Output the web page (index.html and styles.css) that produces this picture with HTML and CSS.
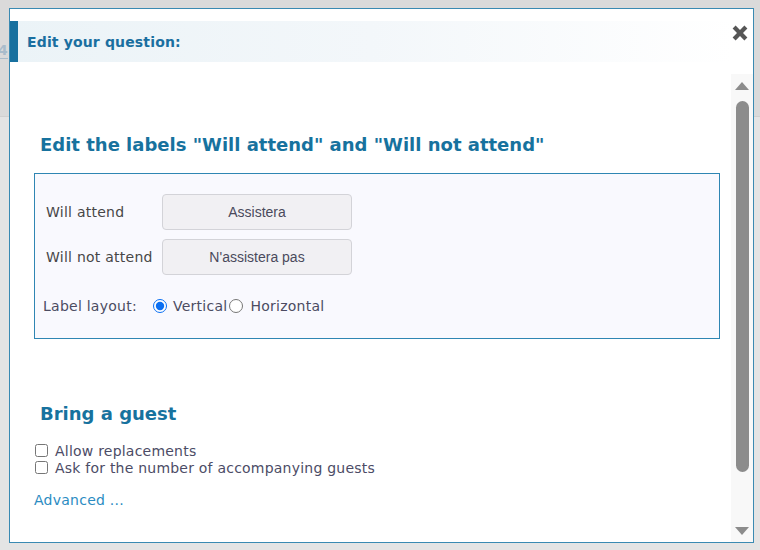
FILE: index.html
```html
<!DOCTYPE html>
<html lang="en">
<head>
<meta charset="utf-8">
<title>Edit your question</title>
<link rel="stylesheet" href="styles.css">
</head>
<body>
<div class="page">
  <div class="page-top"><span class="page-num">4</span></div>
  <div class="page-main"></div>
</div>

<div class="dialog">
  <div class="dlg-header">
    <span class="accent"></span>
    <h1 class="dlg-title">Edit your question:</h1>
  </div>
  <button class="close" type="button" aria-label="Close">
    <svg width="16" height="16" viewBox="0 0 16 16"><path d="M3.6 0.6 L8 5 L12.4 0.6 L15.4 3.6 L11 8 L15.4 12.4 L12.4 15.4 L8 11 L3.6 15.4 L0.6 12.4 L5 8 L0.6 3.6 Z" fill="#565656"/></svg>
  </button>
  <div class="dlg-body">
    <div class="content">
      <h2 class="section-title">Edit the labels "Will attend" and "Will not attend"</h2>
      <div class="labels-box">
        <div class="field-row">
          <label class="field-label">Will attend</label>
          <input class="field-input" type="text" value="Assistera">
        </div>
        <div class="field-row">
          <label class="field-label">Will not attend</label>
          <input class="field-input" type="text" value="N'assistera pas">
        </div>
        <div class="layout-row">
          <span class="layout-label">Label layout:</span>
          <label class="radio"><input type="radio" name="layout" checked>Vertical</label>
          <label class="radio second"><input type="radio" name="layout">Horizontal</label>
        </div>
      </div>
      <h2 class="section-title guest">Bring a guest</h2>
      <label class="check"><input type="checkbox">Allow replacements</label>
      <label class="check"><input type="checkbox">Ask for the number of accompanying guests</label>
      <a class="advanced" href="#">Advanced ...</a>
    </div>
    <div class="scrollbar">
      <span class="arrow-up"></span>
      <span class="thumb"></span>
      <span class="arrow-down"></span>
    </div>
  </div>
</div>
</body>
</html>
```
FILE: styles.css
```css
html, body {
  margin: 0;
  padding: 0;
}
body {
  width: 760px;
  height: 550px;
  overflow: hidden;
  background: #e2e2e2;
  font-family: "DejaVu Sans", Verdana, sans-serif;
}
.page {
  display: flex;
  flex-direction: column;
  height: 550px;
}
.page-top {
  height: 117px;
  background: #dadada;
  border-bottom: 1px solid #d0d0d0;
  box-sizing: border-box;
  padding-top: 40px;
}
.page-num {
  display: inline-block;
  margin-left: -2px;
  font-size: 14px;
  font-weight: bold;
  color: #a9bccb;
  border-bottom: 1px solid #a9bccb;
  line-height: 16px;
}
.page-main {
  flex: 1;
  background: #e4e4e4;
}

/* modal dialog overlays the page */
.dialog {
  position: absolute;
  left: 9px;
  top: 8px;
  width: 743px;
  height: 533px;
  border: 1px solid #3a8ab2;
  background: #fff;
  display: flex;
  flex-direction: column;
}
.dlg-header {
  margin-top: 12px;
  margin-right: 20px;
  height: 41px;
  display: flex;
  align-items: center;
  background: linear-gradient(to right, #ebf3f7 0%, #f3f7fa 50%, #ffffff 100%);
}
.accent {
  width: 8px;
  align-self: stretch;
  background: #17709f;
}
.dlg-title {
  margin: 0 0 0 9px;
  font-size: 14px;
  font-weight: bold;
  color: #1a6fa0;
  line-height: 18px;
  letter-spacing: 0.15px;
}
.close {
  position: absolute;
  top: 16px;
  right: 5px;
  width: 16px;
  height: 16px;
  padding: 0;
  border: 0;
  background: none;
  display: flex;
}
.dlg-body {
  margin-top: 12px;
  flex: 1;
  display: flex;
  min-height: 0;
}
.content {
  flex: 1;
  padding: 60px 11px 0 24px;
  display: flex;
  flex-direction: column;
  align-items: flex-start;
}
.section-title {
  margin: 0 0 17px 0;
  padding-left: 6px;
  font-size: 18px;
  line-height: 22px;
  font-weight: bold;
  color: #17729e;
}
.labels-box {
  align-self: stretch;
  border: 1px solid #2f86b3;
  background: #f9f9fe;
  padding: 20px 8px 22px 8px;
  display: flex;
  flex-direction: column;
  gap: 9px;
}
.field-row {
  display: flex;
  align-items: center;
  height: 36px;
}
.field-label {
  width: 119px;
  padding-left: 3px;
  box-sizing: border-box;
  font-size: 14px;
  letter-spacing: 0.25px;
  color: #474747;
}
.field-input {
  width: 190px;
  height: 36px;
  box-sizing: border-box;
  margin: 0;
  border: 1px solid #d3d3d8;
  border-radius: 4px;
  background: #f1f0f3;
  font-family: "Liberation Sans", Arial, sans-serif;
  font-size: 14px;
  color: #4a4a5c;
  text-align: center;
  padding: 0 6px;
}
.layout-row {
  margin-top: 12px;
  display: flex;
  align-items: center;
  height: 20px;
  font-size: 14px;
  letter-spacing: 0.25px;
  color: #4c4c62;
}
.layout-label {
  width: 105px;
}
.radio {
  display: flex;
  align-items: center;
}
.radio input {
  width: 14px;
  height: 14px;
  margin: 0 6px 0 5px;
  accent-color: #0b6ff2;
}
.radio.second input {
  margin-left: 2px;
  margin-right: 7px;
}
.section-title.guest {
  margin-top: 64px;
}
.check {
  display: flex;
  align-items: center;
  height: 17px;
  font-size: 14px;
  letter-spacing: 0.22px;
  color: #4c4c66;
}
.check input {
  width: 13px;
  height: 13px;
  margin: 0 7px 0 1px;
}
.advanced {
  margin-top: 16px;
  font-size: 14px;
  line-height: 17px;
  letter-spacing: 0.25px;
  color: #2b8cc2;
  text-decoration: none;
}
.scrollbar {
  width: 22px;
  background: #f8f8f8;
  display: flex;
  flex-direction: column;
  align-items: flex-start;
  padding: 8px 0 7px 0;
  box-sizing: border-box;
}
.arrow-up {
  margin-left: 4px;
  width: 0;
  height: 0;
  border-left: 7.5px solid transparent;
  border-right: 7.5px solid transparent;
  border-bottom: 8px solid #8c8c8c;
}
.thumb {
  margin: 11px 0 0 5px;
  width: 13px;
  height: 371px;
  border-radius: 7px;
  background: #8c8c8c;
}
.arrow-down {
  margin: auto 0 0 4px;
  width: 0;
  height: 0;
  border-left: 7.5px solid transparent;
  border-right: 7.5px solid transparent;
  border-top: 8px solid #8c8c8c;
}
```
